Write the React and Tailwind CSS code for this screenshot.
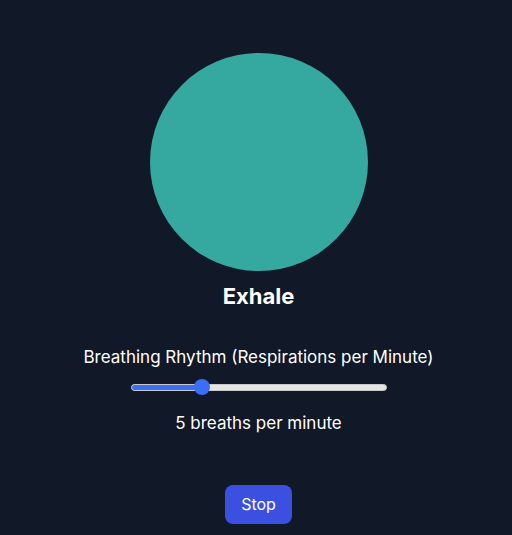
import React, { useState } from 'react';

const App = () => {
  const [rate, setRate] = useState(5);
  const min = 1;
  const max = 16;
  const pct = ((rate - min) / (max - min)) * 100;

  return (
    <div
      className="min-h-screen w-full bg-[#111827] text-white flex flex-col items-center pt-[53px] pl-[5px]"
      style={{ fontFamily: 'Inter, "Noto Sans", sans-serif' }}
    >
      {/* breathing circle */}
      <div className="w-[218px] h-[218px] rounded-full bg-[#35a8a0]" />

      <h2 className="mt-[11px] text-[22px] font-bold leading-7">Exhale</h2>

      <div className="mt-[35px] flex flex-col items-center">
        <label className="text-[17px] leading-6">Breathing Rhythm (Respirations per Minute)</label>

        {/* slider */}
        <div className="relative mt-[10px] w-[256px] h-4 flex items-center">
          <div className="w-full h-[7px] rounded-full bg-[#e5e5e5] border border-[#c9c9c9] overflow-hidden">
            <div className="h-full bg-[#3b6ef6]" style={{ width: `${pct}%` }} />
          </div>
          <div
            className="absolute top-0 w-4 h-4 rounded-full bg-[#3b6ef6]"
            style={{ left: `calc(${pct / 100} * (100% - 16px))` }}
          />
        </div>

        <p className="mt-[14px] text-[17px] leading-7">{rate} breaths per minute</p>
      </div>

      <button
        onClick={() => setRate(rate)}
        className="mt-[48px] bg-[#3b50e0] text-white px-4 py-2 rounded-lg text-base leading-[23px]"
      >
        Stop
      </button>
    </div>
  );
};

export default App;
